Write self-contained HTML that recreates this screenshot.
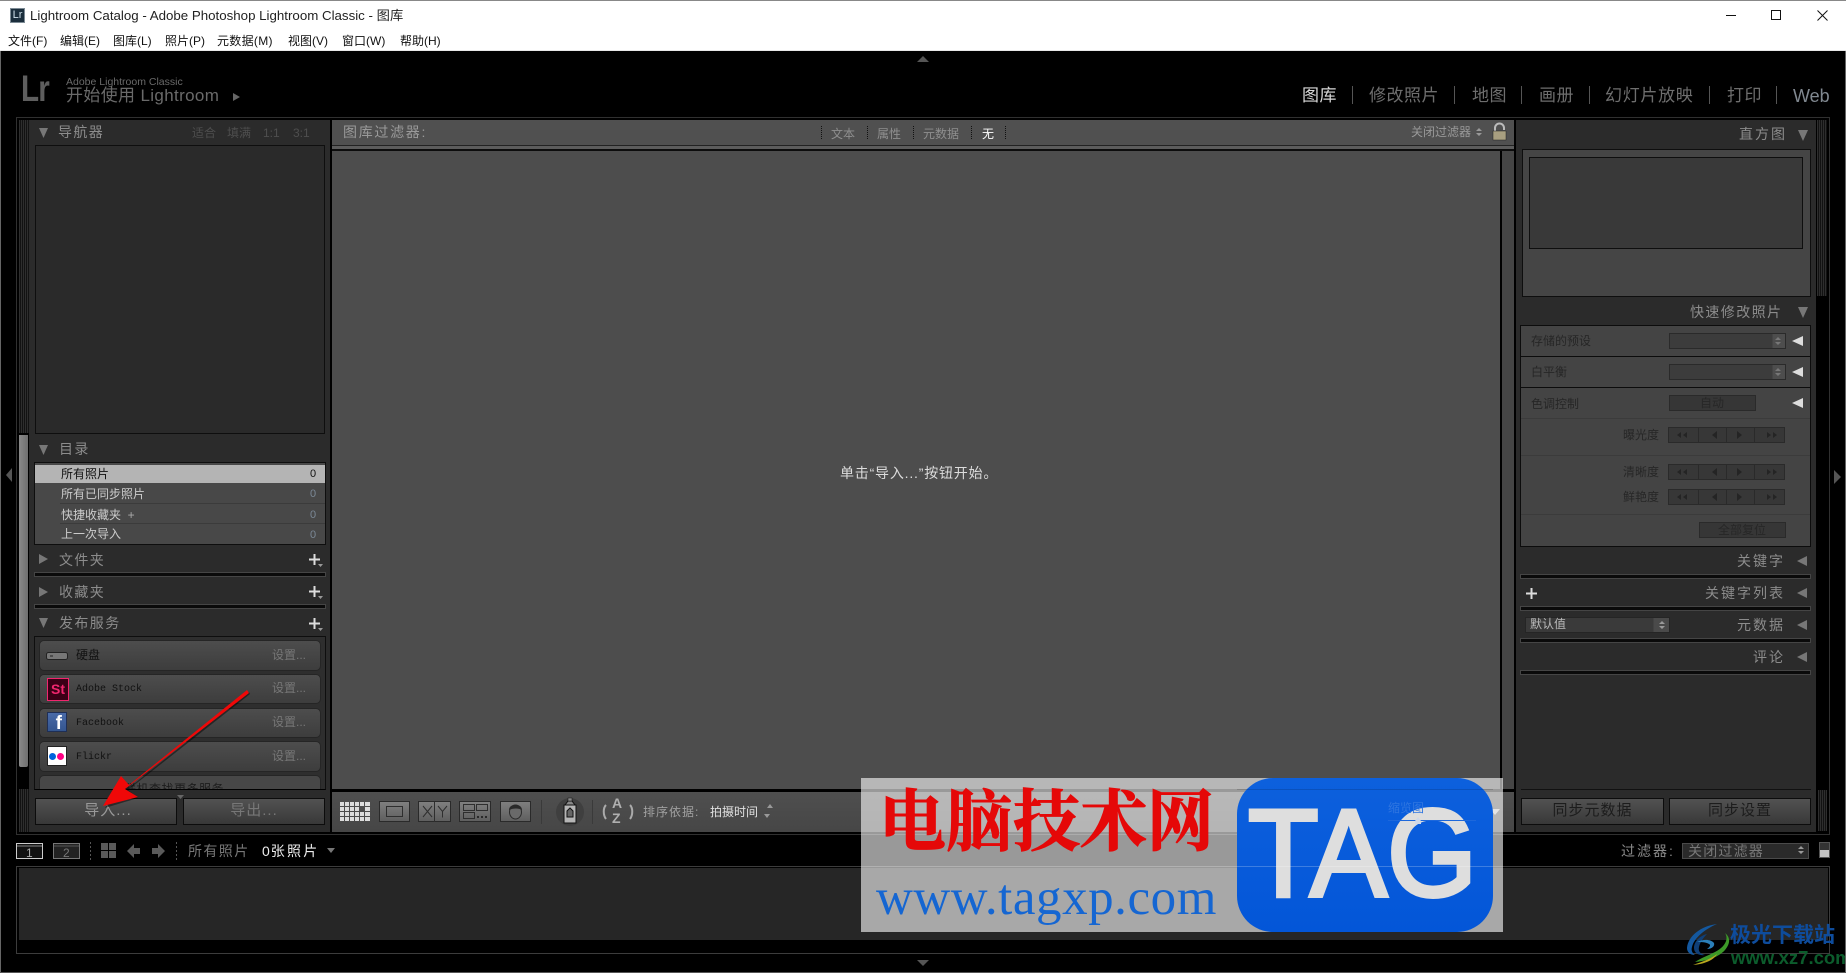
<!DOCTYPE html>
<html lang="zh"><head><meta charset="utf-8"><title>Lightroom Catalog</title>
<style>
html,body{margin:0;padding:0;width:1846px;height:973px;overflow:hidden;background:#000}
body{position:relative;font-family:"Liberation Sans","WenQuanYi Zen Hei","Noto Sans CJK SC",sans-serif}
.a,.t,.b{position:absolute;box-sizing:border-box}
.t{white-space:nowrap;line-height:20px;height:20px;font-size:12px}
.h{font-size:14px;color:#8c8c8c;letter-spacing:1.4px}
.r{color:#262626}
.band{position:absolute;height:5px;background:#0a0a0a;border:1px solid #454545;box-sizing:border-box}
.hatch{position:absolute;background:repeating-linear-gradient(90deg,#2e2e2e 0 1px,#121212 1px 2px)}
.svc{position:absolute;left:39px;width:282px;border:1px solid #252525;border-radius:5px;background:linear-gradient(#4d4d4d,#3d3d3d);box-sizing:border-box}
.btn{position:absolute;border:1px solid #0c0c0c;background:linear-gradient(#525252,#383838);box-sizing:border-box;color:#999;font-size:15px;text-align:center;line-height:24px;letter-spacing:1px}
.sb{position:absolute;background:#3a3a3a;border:1px solid #2a2a2a;box-sizing:border-box}
</style></head><body>

<!-- window chrome -->
<div class="a" style="left:0;top:0;width:1846px;height:51px;background:#fff;border-top:1px solid #888;border-bottom:1px solid #e8e8e8"></div>
<div class="a" style="left:10px;top:8px;width:15px;height:15px;background:#1b2e3c;border:1px solid #7d8b95;color:#cfe0ea;font-size:11px;line-height:13px;text-align:center">Lr</div>
<div class="t" style="left:30px;top:6px;font-size:13.3px;color:#222">Lightroom Catalog - Adobe Photoshop Lightroom Classic - 图库</div>
<div class="t" style="left:8px;top:31px;color:#111">文件(F)</div>
<div class="t" style="left:60px;top:31px;color:#111">编辑(E)</div>
<div class="t" style="left:113px;top:31px;color:#111">图库(L)</div>
<div class="t" style="left:165px;top:31px;color:#111">照片(P)</div>
<div class="t" style="left:217px;top:31px;color:#111;letter-spacing:.3px">元数据(M)</div>
<div class="t" style="left:288px;top:31px;color:#111">视图(V)</div>
<div class="t" style="left:342px;top:31px;color:#111">窗口(W)</div>
<div class="t" style="left:400px;top:31px;color:#111">帮助(H)</div>

<!-- identity plate -->
<div class="a" style="left:21px;top:70px;font-size:37px;line-height:38px;font-weight:bold;color:#5e5e5e;letter-spacing:-1px;transform:scaleX(.8);transform-origin:left">Lr</div>
<div class="t" style="left:66px;top:72px;font-size:10.5px;color:#6a6a6a">Adobe Lightroom Classic</div>
<div class="t" style="left:66px;top:86px;font-size:17px;letter-spacing:.35px;color:#6a6a6a">开始使用 Lightroom</div>

<!-- module picker -->
<div class="t" style="left:1302px;top:85px;font-size:17px;letter-spacing:.5px;color:#d8d8d8;line-height:22px">图库</div>
<div class="t" style="left:1369px;top:85px;font-size:17px;letter-spacing:.5px;color:#6e6e6e;line-height:22px">修改照片</div>
<div class="t" style="left:1472px;top:85px;font-size:17px;letter-spacing:.5px;color:#6e6e6e;line-height:22px">地图</div>
<div class="t" style="left:1539px;top:85px;font-size:17px;letter-spacing:.5px;color:#6e6e6e;line-height:22px">画册</div>
<div class="t" style="left:1605px;top:85px;font-size:17px;letter-spacing:.7px;color:#6e6e6e;line-height:22px">幻灯片放映</div>
<div class="t" style="left:1727px;top:85px;font-size:17px;letter-spacing:.5px;color:#6e6e6e;line-height:22px">打印</div>
<div class="t" style="left:1793px;top:85px;font-size:18px;color:#808890;line-height:22px">Web</div>
<div class="a" style="left:1352px;top:86px;width:1px;height:18px;background:#555"></div>
<div class="a" style="left:1454px;top:86px;width:1px;height:18px;background:#555"></div>
<div class="a" style="left:1521px;top:86px;width:1px;height:18px;background:#555"></div>
<div class="a" style="left:1589px;top:86px;width:1px;height:18px;background:#555"></div>
<div class="a" style="left:1709px;top:86px;width:1px;height:18px;background:#555"></div>
<div class="a" style="left:1776px;top:86px;width:1px;height:18px;background:#555"></div>

<!-- outer frames -->
<div class="a" style="left:16px;top:117px;width:1814px;height:718px;border:1px solid #303030"></div>
<div class="hatch" style="left:19px;top:120px;width:10px;height:313px"></div>
<div class="a" style="left:19px;top:435px;width:9px;height:332px;background:linear-gradient(90deg,#8a8a8a,#6f6f6f);border-radius:0 0 2px 2px"></div>
<div class="hatch" style="left:19px;top:789px;width:10px;height:43px"></div>
<div class="hatch" style="left:1817px;top:120px;width:10px;height:176px"></div>
<div class="hatch" style="left:1818px;top:790px;width:9px;height:41px"></div>

<!-- LEFT PANEL -->
<div class="a" style="left:29px;top:120px;width:301px;height:712px;background:#2b2b2b"></div>
<div class="t h" style="left:58px;top:122px">导航器</div>
<div class="t" style="left:192px;top:123px;color:#4e4e4e">适合</div>
<div class="t" style="left:227px;top:123px;color:#4e4e4e">填满</div>
<div class="t" style="left:263px;top:123px;color:#4e4e4e">1:1</div>
<div class="t" style="left:293px;top:123px;color:#4e4e4e">3:1</div>
<div class="a" style="left:35px;top:145px;width:290px;height:289px;background:#2a2a2a;border:1px solid #0e0e0e"></div>

<div class="t h" style="left:59px;top:439px">目录</div>
<div class="a" style="left:34px;top:462px;width:292px;height:83px;background:#484848;border:1px solid #0e0e0e"></div>
<div class="a" style="left:35px;top:465px;width:290px;height:18px;background:#b4b4b4"></div>
<div class="a" style="left:60px;top:503px;width:265px;height:1px;background:#3b3b3b"></div>
<div class="a" style="left:60px;top:523px;width:265px;height:1px;background:#3b3b3b"></div>
<div class="t" style="left:61px;top:464px;color:#111">所有照片</div>
<div class="t" style="left:61px;top:484px;color:#ccc">所有已同步照片</div>
<div class="t" style="left:61px;top:505px;color:#ccc">快捷收藏夹 &nbsp;<span style="color:#aaa">+</span></div>
<div class="t" style="left:61px;top:524px;color:#ccc">上一次导入</div>
<div class="t" style="left:310px;top:464px;font-size:11px;color:#111">0</div>
<div class="t" style="left:310px;top:484px;font-size:11px;color:#7b8896">0</div>
<div class="t" style="left:310px;top:505px;font-size:11px;color:#7b8896">0</div>
<div class="t" style="left:310px;top:525px;font-size:11px;color:#7b8896">0</div>
<div class="t h" style="left:59px;top:550px">文件夹</div>
<div class="band" style="left:34px;top:572px;width:292px"></div>
<div class="t h" style="left:59px;top:582px">收藏夹</div>
<div class="band" style="left:34px;top:604px;width:292px"></div>
<div class="t h" style="left:59px;top:613px">发布服务</div>
<div class="a" style="left:34px;top:636px;width:292px;height:154px;border:1px solid #0e0e0e;border-bottom-color:#000;overflow:hidden;background:#2e2e2e"></div>
<div class="svc" style="top:640px;height:31px"></div>
<div class="svc" style="top:674px;height:30px"></div>
<div class="svc" style="top:708px;height:30px"></div>
<div class="svc" style="top:741px;height:31px"></div>
<div class="a" style="left:39px;top:775px;width:282px;height:14px;overflow:hidden;border:1px solid #252525;border-bottom:0;border-radius:5px 5px 0 0;background:#474747">
  <div class="t" style="left:84px;top:3px;color:#1c1c1c;letter-spacing:.5px">联机查找更多服务</div>
</div>
<div class="t" style="left:76px;top:645px;color:#111">硬盘</div>
<div class="t" style="left:76px;top:680px;font:10px/20px 'Liberation Mono',monospace;color:#111">Adobe Stock</div>
<div class="t" style="left:76px;top:714px;font:10px/20px 'Liberation Mono',monospace;color:#111">Facebook</div>
<div class="t" style="left:76px;top:748px;font:10px/20px 'Liberation Mono',monospace;color:#111">Flickr</div>
<div class="t" style="left:272px;top:645px;color:#777">设置...</div>
<div class="t" style="left:272px;top:678px;color:#777">设置...</div>
<div class="t" style="left:272px;top:712px;color:#777">设置...</div>
<div class="t" style="left:272px;top:746px;color:#777">设置...</div>
<div class="a" style="left:47px;top:678px;width:22px;height:23px;background:#3a0016;border:1px solid #f0266e;color:#f0266e;font-weight:bold;font-size:14px;line-height:21px;text-align:center">St</div>
<div class="a" style="left:47px;top:712px;width:20px;height:20px;background:linear-gradient(#4a6ba8,#34558f);border:1px solid #1f2f55;color:#fff;font-weight:bold;font-size:19px;line-height:22px;text-align:right;padding-right:4px;overflow:hidden">f</div>
<div class="a" style="left:47px;top:746px;width:20px;height:20px;background:#fff;border:1px solid #222"></div>
<div class="a" style="left:49px;top:753px;width:7px;height:7px;border-radius:50%;background:#0063dc"></div>
<div class="a" style="left:57px;top:753px;width:7px;height:7px;border-radius:50%;background:#ff0084"></div>
<div class="btn" style="left:35px;top:798px;width:142px;height:27px;padding-left:4px">导入...</div>
<div class="btn" style="left:183px;top:798px;width:142px;height:27px;color:#777">导出...</div>

<!-- CENTER -->
<div class="a" style="left:332px;top:120px;width:1182px;height:25px;background:#505050"></div>
<div class="a" style="left:332px;top:145px;width:1182px;height:1px;background:#222"></div>
<div class="a" style="left:332px;top:146px;width:1182px;height:3px;background:#5c5c5c"></div>
<div class="a" style="left:332px;top:149px;width:1182px;height:2px;background:#0c0c0c"></div>
<div class="a" style="left:332px;top:151px;width:1168px;height:638px;background:#4d4d4d"></div>
<div class="a" style="left:1502px;top:151px;width:12px;height:638px;background:#454545"></div>
<div class="a" style="left:332px;top:792px;width:1182px;height:40px;background:linear-gradient(#4f4f4f,#464646)"></div>
<div class="t h" style="left:343px;top:122px;letter-spacing:1.7px;color:#9a9a9a">图库过滤器:</div>
<div class="t" style="left:831px;top:124px;color:#8f8f8f">文本</div>
<div class="t" style="left:877px;top:124px;color:#8f8f8f">属性</div>
<div class="t" style="left:923px;top:124px;color:#8f8f8f">元数据</div>
<div class="t" style="left:982px;top:124px;color:#fff">无</div>
<div class="a" style="left:821px;top:126px;height:13px;border-left:1px dotted #111"></div>
<div class="a" style="left:867px;top:126px;height:13px;border-left:1px dotted #111"></div>
<div class="a" style="left:913px;top:126px;height:13px;border-left:1px dotted #111"></div>
<div class="a" style="left:971px;top:126px;height:13px;border-left:1px dotted #111"></div>
<div class="a" style="left:1005px;top:126px;height:13px;border-left:1px dotted #111"></div>
<div class="t" style="left:1411px;top:122px;color:#999">关闭过滤器</div>
<div class="t" style="left:840px;top:463px;font-size:14px;letter-spacing:.8px;color:#dcdcdc">单击“导入...”按钮开始。</div>
<div class="t" style="left:643px;top:802px;color:#a0a0a0;letter-spacing:1px">排序依据:</div>
<div class="t" style="left:710px;top:802px;color:#e0e0e0">拍摄时间</div>

<!-- RIGHT PANEL -->
<div class="a" style="left:1516px;top:120px;width:300px;height:712px;background:#2b2b2b"></div>
<div class="t h" style="left:1739px;top:124px;letter-spacing:2px">直方图</div>
<div class="a" style="left:1522px;top:149px;width:289px;height:148px;background:#454545;border:1px solid #0e0e0e"></div>
<div class="a" style="left:1529px;top:157px;width:274px;height:92px;background:#393939;border:1px solid #0e0e0e"></div>
<div class="t h" style="left:1690px;top:302px">快速修改照片</div>
<div class="a" style="left:1520px;top:325px;width:291px;height:222px;background:#444;border:1px solid #0c0c0c"></div>
<div class="a" style="left:1521px;top:356px;width:289px;height:1px;background:#0c0c0c"></div>
<div class="a" style="left:1521px;top:387px;width:289px;height:1px;background:#0c0c0c"></div>
<div class="a" style="left:1521px;top:418px;width:289px;height:1px;background:#3b3b3b"></div>
<div class="a" style="left:1521px;top:455px;width:289px;height:1px;background:#3b3b3b"></div>
<div class="a" style="left:1521px;top:514px;width:289px;height:1px;background:#3b3b3b"></div>
<div class="t r" style="left:1531px;top:331px">存储的预设</div>
<div class="t r" style="left:1531px;top:362px">白平衡</div>
<div class="t r" style="left:1531px;top:394px">色调控制</div>
<div class="t r" style="left:1623px;top:425px">曝光度</div>
<div class="t r" style="left:1623px;top:462px">清晰度</div>
<div class="t r" style="left:1623px;top:487px">鲜艳度</div>
<div class="sb" style="left:1669px;top:333px;width:117px;height:16px;background:linear-gradient(90deg,#3c3c3c 89%,#4d4d4d 89%)"></div>
<div class="sb" style="left:1669px;top:364px;width:117px;height:16px;background:linear-gradient(90deg,#3c3c3c 89%,#4d4d4d 89%)"></div>
<div class="sb" style="left:1669px;top:395px;width:87px;height:16px;background:#363636"></div>
<div class="t" style="left:1700px;top:393px;color:#272727">自动</div>
<div class="sb" style="left:1668px;top:427px;width:117px;height:16px;background:#373737"></div>
<div class="sb" style="left:1668px;top:464px;width:117px;height:16px;background:#373737"></div>
<div class="sb" style="left:1668px;top:489px;width:117px;height:16px;background:#373737"></div>
<div class="sb" style="left:1699px;top:522px;width:87px;height:16px;background:#363636"></div>
<div class="t" style="left:1718px;top:520px;color:#272727">全部复位</div>
<div class="t h" style="left:1737px;top:551px;letter-spacing:2px">关键字</div>
<div class="band" style="left:1520px;top:574px;width:291px"></div>
<div class="t h" style="left:1705px;top:583px;letter-spacing:2px">关键字列表</div>
<div class="band" style="left:1520px;top:606px;width:291px"></div>
<div class="a" style="left:1525px;top:617px;width:145px;height:16px;background:linear-gradient(90deg,#3a3a3a 89%,#4a4a4a 89%);border:1px solid #252525"></div>
<div class="t" style="left:1530px;top:614px;color:#bbb">默认值</div>
<div class="t h" style="left:1737px;top:615px;letter-spacing:2px">元数据</div>
<div class="band" style="left:1520px;top:638px;width:291px"></div>
<div class="t h" style="left:1753px;top:647px;letter-spacing:2px">评论</div>
<div class="band" style="left:1520px;top:670px;width:291px"></div>
<div class="a" style="left:1521px;top:789px;width:290px;height:1px;background:#111"></div>
<div class="btn" style="left:1521px;top:798px;width:143px;height:27px;color:#1c1c1c">同步元数据</div>
<div class="btn" style="left:1669px;top:798px;width:142px;height:27px;color:#1c1c1c">同步设置</div>

<!-- FILMSTRIP -->
<div class="t" style="left:188px;top:841px;font-size:14px;letter-spacing:1.4px;color:#777">所有照片</div>
<div class="t" style="left:262px;top:841px;font-size:14px;color:#eee">0<span style="letter-spacing:2.2px;margin-left:1px">张照片</span></div>
<div class="t" style="left:1621px;top:841px;font-size:14px;letter-spacing:2px;color:#8a8a8a">过滤器:</div>
<div class="a" style="left:1682px;top:843px;width:127px;height:16px;background:#2a2a2a;border:1px solid #4a4a4a"></div>
<div class="t" style="left:1688px;top:841px;font-size:14px;letter-spacing:1.2px;color:#777">关闭过滤器</div>
<div class="a" style="left:1819px;top:842px;width:11px;height:16px;background:linear-gradient(#333 50%,#c4c4c4 50%);border:1px solid #555"></div>
<div class="a" style="left:16px;top:866px;width:1814px;height:88px;border:1px solid #3c3c3c"></div>
<div class="a" style="left:19px;top:868px;width:1809px;height:72px;background:#262626"></div>

<!-- ICON OVERLAY -->
<svg class="a" style="left:0;top:0" width="1846" height="973" viewBox="0 0 1846 973">
<!-- window controls -->
<path d="M1726 15.5h10" stroke="#111" fill="none"/>
<rect x="1771.5" y="10.5" width="9" height="9" fill="none" stroke="#111"/>
<path d="M1817.5 10.5l10 10M1827.5 10.5l-10 10" stroke="#111" fill="none"/>
<!-- collapse arrows -->
<path d="M917 62l6-6 6 6z" fill="#555"/>
<path d="M917 960l6 6 6-6z" fill="#555"/>
<path d="M12 468l-6 7 6 7z" fill="#555"/>
<path d="M1834 470l7 7-7 7z" fill="#555"/>
<path d="M233 93l7 4-7 4z" fill="#666"/>
<!-- panel triangles -->
<g fill="#777">
<path d="M39 128h9l-4.5 10z"/><path d="M39 445h9l-4.5 10z"/><path d="M39 554l9 5-9 5z"/><path d="M39 587l9 5-9 5z"/><path d="M39 618h9l-4.5 10z"/>
<path d="M1798 130h10l-5 11z"/><path d="M1798 307h10l-5 11z"/>
<path d="M1807 556l-10 5 10 5z"/><path d="M1807 588l-10 5 10 5z"/><path d="M1807 620l-10 5 10 5z"/><path d="M1807 652l-10 5 10 5z"/>
</g>
<g fill="#ddd"><path d="M1803 336l-11 5 11 5z"/><path d="M1803 367l-11 5 11 5z"/><path d="M1803 398l-11 5 11 5z"/></g>
<path d="M177 795h7l-3.5 4z" fill="#666"/>
<!-- plus icons -->
<g stroke="#ddd" stroke-width="2" fill="none"><path d="M309 559.500h11M314.500 554v11M309 591.500h11M314.500 586v11M309 623.500h11M314.500 618v11M1526 593.500h11M1531.500 588v11"/></g>
<g fill="#999"><path d="M318 564h5l-2.500 3zM318 596h5l-2.500 3zM318 628h5l-2.500 3z"/></g>
<!-- disk icon -->
<rect x="46.500" y="652.500" width="21" height="7" rx="2" fill="#777" stroke="#222"/><path d="M50 656h3" stroke="#222"/>
<!-- dropdown steppers -->
<g fill="#999"><path d="M1479 128l3 3h-6zM1476 133h6l-3 3z"/><path d="M767 808l3-4 3 4zM764 814h6l-3 4z"/></g>
<g fill="#777"><path d="M1778 337l3 3h-6zM1775 342h6l-3 3zM1778 368l3 3h-6zM1775 373h6l-3 3z"/></g>
<g fill="#999"><path d="M1662 621l3 3h-6zM1659 626h6l-3 3z"/><path d="M1801 846l3 3h-6zM1798 851h6l-3 3z"/></g>
<!-- lock -->
<path d="M1495 131v-3a4.500 4.500 0 0 1 9 0v2" fill="none" stroke="#bbb" stroke-width="2"/>
<rect x="1493" y="131" width="13" height="9" fill="#a89f80" stroke="#222" stroke-width=".5"/>
<!-- quick develop step buttons -->
<g stroke="#2a2a2a"><path d="M1698.500 427v16M1726.500 427v16M1754.500 427v16M1698.500 464v16M1726.500 464v16M1754.500 464v16M1698.500 489v16M1726.500 489v16M1754.500 489v16"/></g>
<g fill="#242424">
<path d="M1677 435l4-3v6zM1683 435l4-3v6zM1712 435l5-4v8zM1737 431l5 4-5 4zM1767 432l4 3-4 3zM1773 432l4 3-4 3z"/>
<path d="M1677 472l4-3v6zM1683 472l4-3v6zM1712 472l5-4v8zM1737 468l5 4-5 4zM1767 469l4 3-4 3zM1773 469l4 3-4 3z"/>
<path d="M1677 497l4-3v6zM1683 497l4-3v6zM1712 497l5-4v8zM1737 493l5 4-5 4zM1767 494l4 3-4 3zM1773 494l4 3-4 3z"/>
</g>
<!-- toolbar icons -->
<g fill="#dcdcdc">
<path d="M340 802h4v4h-4zM345 802h4v4h-4zM350 802h4v4h-4zM355 802h4v4h-4zM360 802h4v4h-4zM365 802h5v4h-5z"/>
<path d="M340 807h4v4h-4zM345 807h4v4h-4zM350 807h4v4h-4zM355 807h4v4h-4zM365 807h5v4h-5z"/>
<path d="M340 812h4v4h-4zM345 812h4v4h-4zM350 812h4v4h-4zM355 812h4v4h-4zM360 812h4v4h-4zM365 812h5v4h-5z"/>
<path d="M340 817h4v4h-4zM345 817h4v4h-4zM350 817h4v4h-4zM355 817h4v4h-4zM360 817h4v4h-4zM365 817h5v4h-5z"/>
</g>
<defs><linearGradient id="g" x1="0" y1="0" x2="0" y2="1"><stop offset="0" stop-color="#808080"/><stop offset="1" stop-color="#5e5e5e"/></linearGradient></defs>
<g stroke="#2a2a2a"><rect x="379.500" y="801.500" width="30" height="20" fill="url(#g)"/><rect x="418.500" y="801.500" width="32" height="20" fill="url(#g)"/><rect x="459.500" y="801.500" width="31" height="20" fill="url(#g)"/><rect x="500.500" y="801.500" width="30" height="20" fill="url(#g)"/></g>
<g fill="none" stroke="#2e2e2e">
<rect x="386.500" y="806.500" width="16" height="10"/><path d="M434.500 802v20M423 806l9 11M432 806l-9 11M438 806l4.500 5.500 4.500-5.500M442.500 811.500v6"/>
<rect x="463.500" y="804.500" width="11" height="6"/><rect x="476.500" y="804.500" width="11" height="6"/><rect x="463.500" y="812.500" width="11" height="6"/>
</g>
<path d="M477 816h2v2h-2zM481 816h2v2h-2zM485 816h2v2h-2z" fill="#2a2a2a"/>
<ellipse cx="515.500" cy="812" rx="6" ry="7" fill="#6a6a6a" stroke="#2a2a2a"/><path d="M509 810c0-7 13-7 13 0-3-2-9-2-13 0z" fill="#2a2a2a"/>
<path d="M541.500 800v24M592.500 800v24" stroke="#3a3a3a"/>
<circle cx="570" cy="812" r="14" fill="#3f3f3f"/>
<rect x="564" y="805" width="12" height="18" fill="#b5b5b5" stroke="#111"/><path d="M565 805l3-4h4l3 4z" fill="#888" stroke="#111"/><rect x="568" y="798" width="4" height="3" fill="#888" stroke="#111" stroke-width=".5"/>
<path d="M567 817v-6l3-3 3 3v6z" fill="#666" stroke="#111"/>
<!-- sort icon -->
<text x="612" y="808" font-family="Liberation Sans" font-weight="bold" font-size="14" fill="#b0b0b0">A</text>
<text x="612" y="823" font-family="Liberation Sans" font-weight="bold" font-size="14" fill="#b0b0b0">Z</text>
<path d="M606 805c-3 3-3 10 0 14M630 805c3 3 3 10 0 14" fill="none" stroke="#aaa" stroke-width="2"/>
<!-- thumb slider tail -->
<path d="M1490 809h10l-5 6z" fill="#bbb"/>
<!-- filmstrip icons -->
<rect x="16.500" y="843.500" width="26" height="15" fill="#111" stroke="#ccc"/><path d="M17 846h25" stroke="#888"/>
<text x="26" y="857" font-family="Liberation Sans" font-size="12" fill="#aaa">1</text>
<rect x="53.500" y="843.500" width="26" height="15" fill="#222" stroke="#777"/><path d="M54 846h25" stroke="#555"/>
<text x="63" y="857" font-family="Liberation Sans" font-size="12" fill="#777">2</text>
<path d="M90.500 842v18M176.500 842v18" stroke="#555" stroke-dasharray="2 2"/>
<path d="M101 843h7v7h-7zM109 843h7v7h-7zM101 851h7v7h-7zM109 851h7v7h-7z" fill="#5a5a5a"/>
<path d="M127 851l7-7v4h6v6h-6v4z" fill="#5a5a5a"/><path d="M165 851l-7-7v4h-6v6h6v4z" fill="#5a5a5a"/>
<path d="M327 848h8l-4 5z" fill="#777"/>
<!-- red arrow -->
<g transform="translate(2 2)" opacity=".45"><path d="M248 692L126 788l10 8-33 10 17-29 8 8L247 690z" fill="#000"/></g>
<path d="M249 693L125 789l13 8-35 9 18-30 8 9L247 690z" fill="#f00808"/>
</svg>

<!-- WATERMARK TAG -->
<div class="a" style="left:861px;top:778px;width:642px;height:154px;background:rgba(255,255,255,.6)"></div>
<div class="t" style="left:879px;top:790px;height:66px;line-height:66px;font-family:'Liberation Serif','Noto Serif CJK SC',serif;font-weight:bold;font-size:67px;color:#e50808;-webkit-text-stroke:1px #e50808">电脑技术网</div>
<div class="t" style="left:876px;top:870px;height:56px;line-height:56px;font-family:'Liberation Serif',serif;font-size:51px;letter-spacing:.55px;color:#1566d2">www.tagxp.com</div>
<div class="a" style="left:1237px;top:778px;width:256px;height:154px;background:linear-gradient(#0d60dd,#0356d8);border-radius:36px"></div>
<svg class="a" style="left:1237px;top:778px" width="256" height="154"><text x="11" y="118" font-family="Liberation Sans" font-size="124" fill="#dedede" stroke="#dedede" stroke-width="4" textLength="229" lengthAdjust="spacingAndGlyphs">TAG</text>
<path d="M0 88.500h256" stroke="rgba(255,255,255,.22)"/><path d="M0 11.500h256" stroke="rgba(0,0,0,.14)"/></svg>
<div class="t" style="left:1388px;top:798px;font-size:12px;color:#2f75e0">缩览图</div>
<div class="a" style="left:1388px;top:820px;width:88px;height:1px;background:#1d68dc"></div>
<svg class="a" style="left:1410px;top:812px" width="16" height="14"><path d="M5 9l3-4 3 4v3H5z" fill="#cfd8e8"/></svg>

<!-- XZ7 WATERMARK -->
<svg class="a" style="left:1685px;top:920px" width="50" height="46" viewBox="0 0 50 46">
<path d="M32 4C16 6 3 16 2 28c0 4 3 7 8 7-3-2-4-5-3-8C9 18 20 9 32 4z" fill="#14589f"/>
<path d="M22 14c-8 2-13 8-13 14 0 5 5 8 11 7-5-1-7-4-6-8 1-5 5-10 8-13z" fill="#0f3f78"/>
<path d="M40 13c4 6 0 14-10 19-8 4-14 6-20 10 8-1 22-3 30-12 5-6 6-12 0-17z" fill="#3c9a28"/>
<path d="M12 22c6-3 14-3 17 1 1 3-2 6-7 6 3-2 4-4 2-5-3-2-8-2-12-2z" fill="#2b7fb8"/>
<path d="M8 45c8-3 16-5 24-11-3 6-12 10-24 11z" fill="#b9a81e"/>
</svg>
<div class="t" style="left:1730px;top:922px;height:24px;line-height:24px;font-size:21px;font-weight:bold;color:#0e4c9c;font-family:'Noto Sans CJK SC',sans-serif">极光下载站</div>
<div class="t" style="left:1731px;top:947px;height:22px;line-height:22px;font-size:18.500px;color:#0c5c2c;font-weight:bold">www.xz7.com</div>

<!-- window border -->
<div class="a" style="left:0;top:51px;width:1px;height:922px;background:#666"></div>
<div class="a" style="left:1845px;top:51px;width:1px;height:922px;background:#666"></div>
<div class="a" style="left:0;top:972px;width:1846px;height:1px;background:#555"></div>
</body></html>
